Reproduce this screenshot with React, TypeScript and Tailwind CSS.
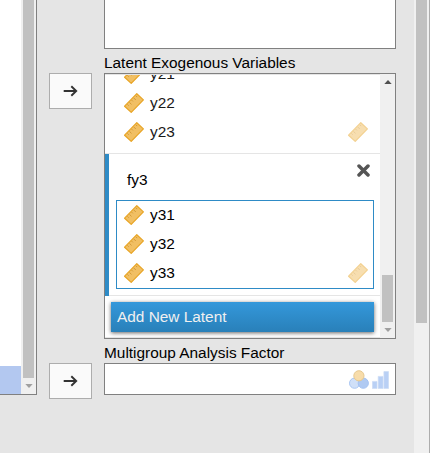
import React from 'react';

function Ruler({ faded = false }: { faded?: boolean }) {
  return (
    <svg width="20" height="20" viewBox="0 0 20 20" className={faded ? 'shrink-0 opacity-50' : 'shrink-0'}>
      <path d="M0.6 13.2 L12.8 0.7 L19.4 6.9 L7.2 19.4 Z" fill="#f1bf63" stroke="#e8a424" strokeWidth="1.2" strokeLinejoin="round" />
      <path d="M3.4 11.4 L4.7 12.7 M5.4 9.3 L7.5 11.4 M7.6 7.1 L8.9 8.4 M9.7 4.9 L11.8 7 M11.9 2.8 L13.2 4.1" stroke="#cf9431" strokeWidth="0.9" />
    </svg>
  );
}

function VariableRow({ name, inset, allowed = false }: { name: string; inset: string; allowed?: boolean }) {
  return (
    <div className={`flex h-[29px] items-center pb-[2px] ${inset}`}>
      <Ruler />
      <span className="ml-[6px] flex-1">{name}</span>
      {allowed && <Ruler faded />}
    </div>
  );
}

function MoveButton() {
  return (
    <button className="flex h-9 w-[43px] shrink-0 items-center justify-center border border-[#adadad] bg-[#fafafa]">
      <svg width="15" height="12" viewBox="0 0 15 12" fill="none" stroke="#333" strokeWidth="1.9">
        <path d="M0.7 6 H13.5 M8.3 1.2 L13.2 6 L8.3 10.8" />
      </svg>
    </button>
  );
}

function Caret({ up = false }: { up?: boolean }) {
  return (
    <svg width="8" height="4" viewBox="0 0 8 4" className="shrink-0">
      <path d={up ? 'M0.3 4 L4 0 L7.7 4 Z' : 'M0.3 0 L4 4 L7.7 0 Z'} fill={up ? '#505050' : '#a0a0a0'} />
    </svg>
  );
}

function NominalIcon() {
  return (
    <svg width="20" height="19" viewBox="0 0 20 19">
      <circle cx="5.6" cy="13.2" r="5.1" fill="#d0e0f8" stroke="#a9c6f2" strokeWidth="1" />
      <circle cx="14.3" cy="13.2" r="5.1" fill="#b0caf2" stroke="#a3c2f2" strokeWidth="1" />
      <circle cx="9.9" cy="5.8" r="5.1" fill="#f7dcaa" stroke="#e6c88f" strokeWidth="1" />
    </svg>
  );
}

function OrdinalIcon() {
  return (
    <svg width="17" height="18" viewBox="0 0 17 18" fill="#b9d0f5" stroke="#cbdcf7" strokeWidth="0.7">
      <path d="M0.4 10.4 H5 V17.6 H0.4 Z M6.2 5.4 H11 V17.6 H6.2 Z M11.9 0.6 H16.6 V17.6 H11.9 Z" />
    </svg>
  );
}

export default function App() {
  return (
    <div className="flex h-[453px] w-[430px] overflow-hidden bg-[#e5e5e5] text-[15.4px] leading-[18px] text-[#1a1a1a]" style={{ fontFamily: '"Liberation Sans", Arial, sans-serif' }}>
      <div className="flex h-[395px] w-[37px] shrink-0 border-r border-b border-[#808080] bg-white">
        <div className="flex w-[21px] flex-col justify-end">
          <div className="h-7 bg-[#b3c8f0]" />
        </div>
        <div className="flex w-[15px] flex-col items-center bg-[#f0f0f0]">
          <div className="mb-[6px] h-[378px] w-[11px] bg-[#c1c1c1]" />
          <Caret />
        </div>
      </div>

      <div className="ml-3 flex w-[43px] shrink-0 flex-col pt-[73px]">
        <MoveButton />
        <div className="h-[254px]" />
        <MoveButton />
      </div>

      <div className="ml-3 flex w-[292px] shrink-0 flex-col">
        <div className="h-[49px] border border-t-0 border-[#808080] bg-white" />
        <div className="mt-[5px] h-[19px] text-black">Latent Exogenous Variables</div>

        <div className="flex h-[266px] border border-[#808080] bg-white">
          <div className="flex w-[275px] flex-col border-y border-[#e5e5e5]">
            <div className="flex h-[78px] flex-col justify-end overflow-hidden">
              <div className="shrink-0">
                <VariableRow name="y21" inset="pl-[19px]" />
                <VariableRow name="y22" inset="pl-[19px]" />
                <VariableRow name="y23" inset="pr-[12px] pl-[19px]" allowed />
              </div>
              <div className="h-[6px] shrink-0" />
            </div>
            <div className="h-px bg-[#e5e5e5]" />
            <div className="h-[142px] border-b border-[#e5e5e5]">
              <div className="h-[142px] border-l-4 border-[#2e8bc6] pt-[10px] pl-[7px]">
                <div className="flex h-9 justify-between pr-1">
                  <span className="mt-[7px] pl-[11px] text-black">fy3</span>
                  <svg width="13" height="13" viewBox="0 0 13 13" className="mr-[6px]">
                    <path d="M2 2 L11 11 M11 2 L2 11" stroke="#555" strokeWidth="3.5" strokeLinecap="round" />
                  </svg>
                </div>
                <div className="h-[89px] w-[258px] border border-[#2e8bc6] text-black">
                  <VariableRow name="y31" inset="pl-[7px]" />
                  <VariableRow name="y32" inset="pl-[7px]" />
                  <VariableRow name="y33" inset="pr-[5px] pl-[7px]" allowed />
                </div>
              </div>
            </div>
            <button className="mt-[6px] ml-[6px] h-[30px] w-[263px] shrink-0 bg-linear-to-b from-[#3498db] to-[#2980b9] pl-[6px] text-left text-[#f0f0f0] shadow-[0_1px_4px_rgba(0,0,0,0.6)]">
              Add New Latent
            </button>
          </div>
          <div className="flex w-[15px] flex-col items-center bg-[#f0f0f0] pt-[6px]">
            <Caret up />
            <div className="mt-[191px] mb-[6px] h-[47px] w-[11px] shrink-0 bg-[#c1c1c1]" />
            <Caret />
          </div>
        </div>

        <div className="mt-[5px] h-[19px] text-black">Multigroup Analysis Factor</div>
        <div className="flex h-8 items-center justify-end gap-[3px] border border-[#808080] bg-white pt-px pr-[6px]">
          <NominalIcon />
          <OrdinalIcon />
        </div>
      </div>

      <div className="ml-[18px] flex w-4 shrink-0 justify-center border-r border-[#adadad] bg-[#f0f0f0]">
        <div className="h-[323px] w-[11px] bg-[#c1c1c1]" />
      </div>
    </div>
  );
}
